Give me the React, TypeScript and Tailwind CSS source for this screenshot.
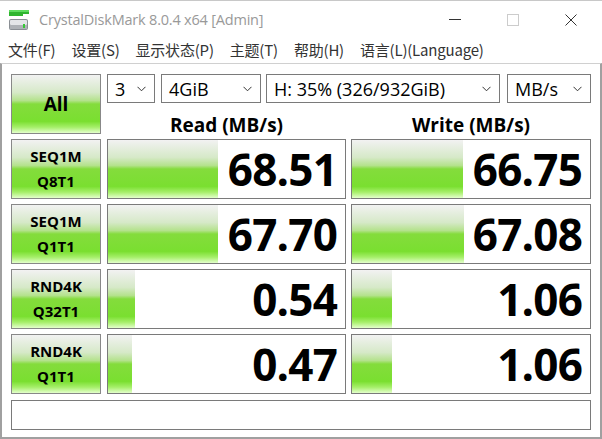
import React from 'react';

const rows = [
  { l1: 'SEQ1M', l2: 'Q8T1', read: '68.51', readBar: 110, write: '66.75', writeBar: 111 },
  { l1: 'SEQ1M', l2: 'Q1T1', read: '67.70', readBar: 110, write: '67.08', writeBar: 112 },
  { l1: 'RND4K', l2: 'Q32T1', read: '0.54', readBar: 27, write: '1.06', writeBar: 40 },
  { l1: 'RND4K', l2: 'Q1T1', read: '0.47', readBar: 24, write: '1.06', writeBar: 40 },
];

const green =
  'bg-[linear-gradient(to_bottom,#f2f2f2_0%,#d6e9c8_30%,#b4e28c_44%,#84dc3c_50%,#7adf30_80%,#a6ef6a_90%,#e4ffcc_100%)]';

const Chevron = () => (
  <svg width="9" height="6" viewBox="0 0 9 6" className="shrink-0">
    <polyline points="0.5,0.8 4.5,4.8 8.5,0.8" fill="none" stroke="#333" strokeWidth="1" />
  </svg>
);

const Select = ({ value, w }: { value: string; w: string }) => (
  <div className={`${w} h-[29px] border border-[#7a7a7a] bg-white flex items-center justify-between pl-[7px] pr-[8px]`}>
    <span className="text-[18px] leading-none text-black">{value}</span>
    <Chevron />
  </div>
);

const Result = ({ value, bar }: { value: string; bar: number }) => (
  <div className="relative h-[60px] border border-[#7a7a7a] bg-white flex items-center justify-end pr-[8px]">
    <div className={`absolute left-0 top-0 bottom-0 ${green}`} style={{ width: bar }} />
    <span className="relative text-[44px] font-bold leading-none text-black tracking-[-0.8px]">{value}</span>
  </div>
);

const DiskIcon = () => (
  <svg width="22" height="22" viewBox="0 0 22 22">
    <rect x="1" y="1" width="20" height="6" fill="#2fb52f" />
    <rect x="1" y="1" width="20" height="2" fill="#5fdc5f" />
    <rect x="15" y="5" width="6" height="2" fill="#ffffff" />
    <rect x="1" y="10" width="19" height="11" rx="2" fill="#8a8f94" />
    <rect x="2" y="11" width="17" height="5" rx="1" fill="#e4e6e8" />
    <rect x="2" y="16" width="17" height="4" fill="#aeb2b6" />
    <rect x="15" y="15" width="2" height="4" fill="#35c835" />
  </svg>
);

export default function App() {
  return (
    <div className="w-[602px] h-[439px] bg-white flex flex-col overflow-hidden font-['Open_Sans','Noto_Sans_CJK_SC',sans-serif] border-t border-[#c8c8c8]">
      {/* title bar */}
      <div className="h-[37px] flex items-center shrink-0">
        <div className="ml-[8px] mr-[9px] flex items-center">
          <DiskIcon />
        </div>
        <span className="text-[14.5px] text-[#999] tracking-[-0.2px]">CrystalDiskMark 8.0.4 x64 [Admin]</span>
        <div className="ml-auto flex items-center h-full">
          <div className="w-[58px] h-full flex items-center justify-center">
            <div className="w-[12px] h-px bg-[#333]" />
          </div>
          <div className="w-[58px] h-full flex items-center justify-center">
            <div className="w-[12px] h-[12px] border border-[#ccc]" />
          </div>
          <div className="w-[58px] h-full flex items-center justify-center mr-[2px]">
            <svg width="12" height="12" viewBox="0 0 12 12">
              <path d="M0.5 0.5L11.5 11.5M11.5 0.5L0.5 11.5" stroke="#333" strokeWidth="1" />
            </svg>
          </div>
        </div>
      </div>
      {/* menu */}
      <div className="h-[25px] flex items-center gap-[16px] pl-[8px] text-[15px] text-[#333] shrink-0 font-['Noto_Sans_CJK_SC',sans-serif] tracking-[-0.2px]">
        <span>文件(F)</span>
        <span>设置(S)</span>
        <span>显示状态(P)</span>
        <span>主题(T)</span>
        <span>帮助(H)</span>
        <span>语言(L)(Language)</span>
      </div>
      {/* client */}
      <div className="flex-1 border-t border-[#d0d0d0] border-l-2 border-l-[#a0a0a0] border-r-2 border-r-[#a0a0a0] border-b-2 border-b-[#a0a0a0] pl-[9px] pt-[10px] flex flex-col">
        <div className="flex gap-[6px]">
          <div className={`w-[90px] h-[60px] border border-[#888] ${green} flex items-center justify-center text-[19px] font-bold text-black`}>
            All
          </div>
          <div className="flex flex-col">
            <div className="flex">
              <Select value="3" w="w-[48px]" />
              <div className="w-[6px]" />
              <Select value="4GiB" w="w-[100px]" />
              <div className="w-[5px]" />
              <Select value="H: 35% (326/932GiB)" w="w-[234px]" />
              <div className="w-[7px]" />
              <Select value="MB/s" w="w-[84px]" />
            </div>
            <div className="flex h-[31px] items-start pt-[13px] leading-[19px] text-[19px] font-bold text-black">
              <div className="w-[239px] text-center">Read (MB/s)</div>
              <div className="w-[5px]" />
              <div className="w-[240px] text-center">Write (MB/s)</div>
            </div>
          </div>
        </div>
        <div className="flex flex-col gap-[5px] mt-[5px]">
          {rows.map((r, i) => (
            <div key={i} className="flex">
              <div className={`w-[90px] h-[60px] border border-[#888] ${green} flex flex-col items-center justify-center text-[15px] font-bold text-black leading-[25px]`}>
                <span>{r.l1}</span>
                <span>{r.l2}</span>
              </div>
              <div className="w-[6px]" />
              <div className="w-[239px]">
                <Result value={r.read} bar={r.readBar} />
              </div>
              <div className="w-[5px]" />
              <div className="w-[240px]">
                <Result value={r.write} bar={r.writeBar} />
              </div>
            </div>
          ))}
        </div>
        <div className="mt-[6px] w-[580px] h-[30px] border border-[#7a7a7a] bg-white" />
      </div>
    </div>
  );
}
